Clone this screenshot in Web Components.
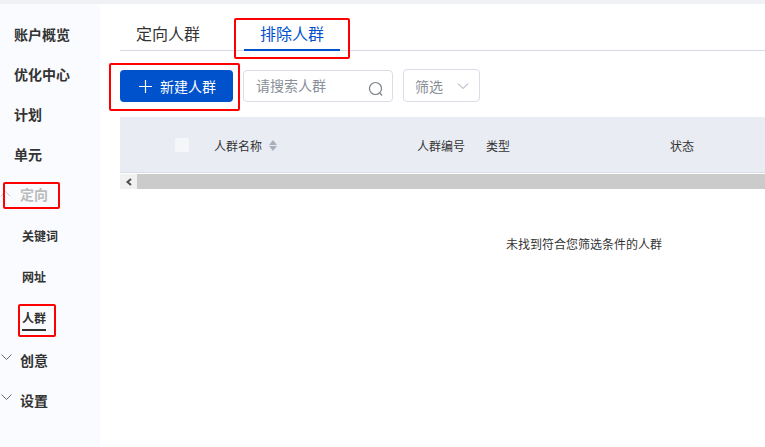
<!DOCTYPE html>
<html lang="zh">
<head>
<meta charset="utf-8">
<title>人群</title>
<style>
  html, body { margin: 0; height: 100%; background: #fff; overflow: hidden; }
  body { font-family: "Liberation Sans", "Noto Sans CJK SC", sans-serif; color: #333; }
</style>
</head>
<body>
<audience-page></audience-page>

<script>
const chevron = `<svg width="12" height="12" viewBox="0 0 12 12" fill="none" stroke="currentColor" stroke-width="1"><path d="M1.5 3.5 6.5 8.5 11.5 3.5"/></svg>`;

class SideNav extends HTMLElement {
    constructor() {
        super();
        this.attachShadow({ mode: 'open' });
        this.shadowRoot.innerHTML = `
            <style>
                :host { display: block; width: 100px; flex: none; background: #fafbfe; box-sizing: border-box; padding-top: 10px; position: relative; }
                .item { display: flex; align-items: center; height: 40px; padding-left: 14px; font-size: 14px; font-weight: 700; color: #333; }
                .group { padding-left: 0; }
                .group svg { width: 12px; margin: -6px 8px 0 0; color: #667; flex: none; }
                .group.open { color: #bbb; height: 40px; }
                .group.open svg { transform: rotate(180deg); color: #ccc; margin-top: 0; }
                .sub { height: 41.5px; padding-left: 22px; font-size: 12px; color: #333; }
                .sub span { padding: 4px 0 3px; }
                .sub.active span { border-bottom: 2px solid #333; }
                .sub.active { margin-bottom: 1px; }
                .mark { position: absolute; border: 2px solid #f00; border-radius: 2px; box-sizing: border-box; }
            </style>
            <div class="item">账户概览</div>
            <div class="item">优化中心</div>
            <div class="item">计划</div>
            <div class="item">单元</div>
            <div class="item group open">${chevron}定向</div>
            <div class="item sub"><span>关键词</span></div>
            <div class="item sub"><span>网址</span></div>
            <div class="item sub active"><span>人群</span></div>
            <div class="item group">${chevron}创意</div>
            <div class="item group">${chevron}设置</div>
            <div class="mark" style="left:3px;top:178px;width:57px;height:27px"></div>
            <div class="mark" style="left:18px;top:300px;width:38px;height:33px"></div>
        `;
    }
}

class TabBar extends HTMLElement {
    constructor() {
        super();
        this.attachShadow({ mode: 'open' });
        this.shadowRoot.innerHTML = `
            <style>
                :host { display: flex; height: 37px; box-sizing: border-box; margin-top: 10px; padding-left: 16px; gap: 56px; border-bottom: 1px solid #d5dae6; position: relative; font-size: 16px; }
                .tab { height: 37px; box-sizing: border-box; padding-top: 10px; line-height: 22px; color: #333; }
                .tab.active { color: #0052cc; border-bottom: 2px solid #0052cc; margin-left: -12px; width: 96px; text-align: center; white-space: nowrap; }
                .mark { position: absolute; left: 114px; top: 4px; width: 116px; height: 41px; border: 2px solid #f00; border-radius: 2px; box-sizing: border-box; }
            </style>
            <div class="tab">定向人群</div>
            <div class="tab active">排除人群</div>
            <div class="mark"></div>
        `;
    }
}

class ToolBar extends HTMLElement {
    constructor() {
        super();
        this.attachShadow({ mode: 'open' });
        this.shadowRoot.innerHTML = `
            <style>
                :host { display: flex; gap: 10px; margin-top: 19px; position: relative; align-items: flex-start; }
                .add { width: 113px; height: 32px; flex: none; box-sizing: border-box; background: #0052cc; border-radius: 4px; color: #fff; font-size: 14px; display: flex; align-items: center; justify-content: flex-start; gap: 8px; padding-left: 19px; }
                .search { width: 150px; height: 32px; flex: none; box-sizing: border-box; border: 1px solid #d9dde8; border-radius: 4px; display: flex; align-items: center; justify-content: space-between; padding: 0 8px 2px 12px; font-size: 14px; color: #8a8f99; }
                .search svg { margin-top: 7px; }
                .filter { width: 77px; height: 33px; margin-top: -1px; flex: none; box-sizing: border-box; border: 1px solid #d9dde8; border-radius: 4px; display: flex; align-items: center; justify-content: space-between; padding: 0 10px 0 11px; font-size: 14px; color: #8a8f99; }
                .mark { position: absolute; left: -11px; top: -7px; width: 131px; height: 48px; border: 2px solid #f00; border-radius: 2px; box-sizing: border-box; }
            </style>
            <div class="add">
                <svg width="13" height="13" viewBox="0 0 13 13" stroke="#fff" stroke-width="1.2"><path d="M6.5 0V13M0 6.5H13"/></svg>
                <span>新建人群</span>
            </div>
            <div class="search">
                <span>请搜索人群</span>
                <svg width="16" height="16" viewBox="0 0 16 16" fill="none" stroke="#7d838c" stroke-width="1.2"><circle cx="7.5" cy="7.5" r="6"/><path d="M11.8 12 14 14.5"/></svg>
            </div>
            <div class="filter">
                <span>筛选</span>
                <svg width="12" height="12" viewBox="0 0 12 12" fill="none" stroke="#9aa0aa" stroke-width="1"><path d="M1 3.5 6 8.5 11 3.5"/></svg>
            </div>
            <div class="mark"></div>
        `;
    }
}

class AudienceTable extends HTMLElement {
    constructor() {
        super();
        this.attachShadow({ mode: 'open' });
        this.shadowRoot.innerHTML = `
            <style>
                :host { display: block; margin-top: 15px; font-size: 12px; color: #333; }
                .head { display: grid; grid-template-columns: 55px 39px 203px 69px 184px 1fr; align-items: center; height: 55px; box-sizing: border-box; padding-top: 1px; background: #e9ecf3; border-bottom: 0; box-shadow: inset 0 -1px 0 #e9ecf3; }
                .rule { height: 1px; background: #d9dde8; }
                .check { width: 14px; height: 14px; background: #f4f6fa; grid-column: 2; }
                .name { display: flex; align-items: center; gap: 7px; }
                .sort { display: flex; flex-direction: column; gap: 1px; }
                .sort i { display: block; width: 0; height: 0; border-left: 4px solid transparent; border-right: 4px solid transparent; }
                .sort i:first-child { border-bottom: 5px solid #a9aebc; }
                .sort i:last-child { border-top: 5px solid #a9aebc; }
                .bar { display: flex; height: 15px; margin-top: 1px; background: #cbcbcb; }
                .arrow { width: 17px; background: #f1f1f1; display: flex; align-items: center; justify-content: center; }
                .empty { margin: 48px 0 0 386px; line-height: 16px; white-space: nowrap; }
            </style>
            <div class="head">
                <span></span>
                <span class="check"></span>
                <span class="name">人群名称 <span class="sort"><i></i><i></i></span></span>
                <span>人群编号</span>
                <span>类型</span>
                <span>状态</span>
            </div>
            <div class="rule"></div>
            <div class="bar">
                <div class="arrow"><svg width="8" height="8" viewBox="0 0 8 8" fill="none" stroke="#505050" stroke-width="2"><path d="M6 1 2.5 4 6 7"/></svg></div>
            </div>
            <div class="empty">未找到符合您筛选条件的人群</div>
        `;
    }
}

class AudiencePage extends HTMLElement {
    constructor() {
        super();
        this.attachShadow({ mode: 'open' });
        this.shadowRoot.innerHTML = `
            <style>
                :host { display: flex; flex-direction: column; height: 447px; width: 765px; overflow: hidden; }
                .top { height: 4px; background: #f0f1f5; flex: none; }
                .body { display: flex; flex: 1; min-height: 0; }
                .main { flex: 1; min-width: 0; padding-left: 20px; display: flex; flex-direction: column; }
            </style>
            <div class="top"></div>
            <div class="body">
                <side-nav></side-nav>
                <div class="main">
                    <tab-bar></tab-bar>
                    <tool-bar></tool-bar>
                    <audience-table></audience-table>
                </div>
            </div>
        `;
    }
}

customElements.define('side-nav', SideNav);
customElements.define('tab-bar', TabBar);
customElements.define('tool-bar', ToolBar);
customElements.define('audience-table', AudienceTable);
customElements.define('audience-page', AudiencePage);
</script>
</body>
</html>
